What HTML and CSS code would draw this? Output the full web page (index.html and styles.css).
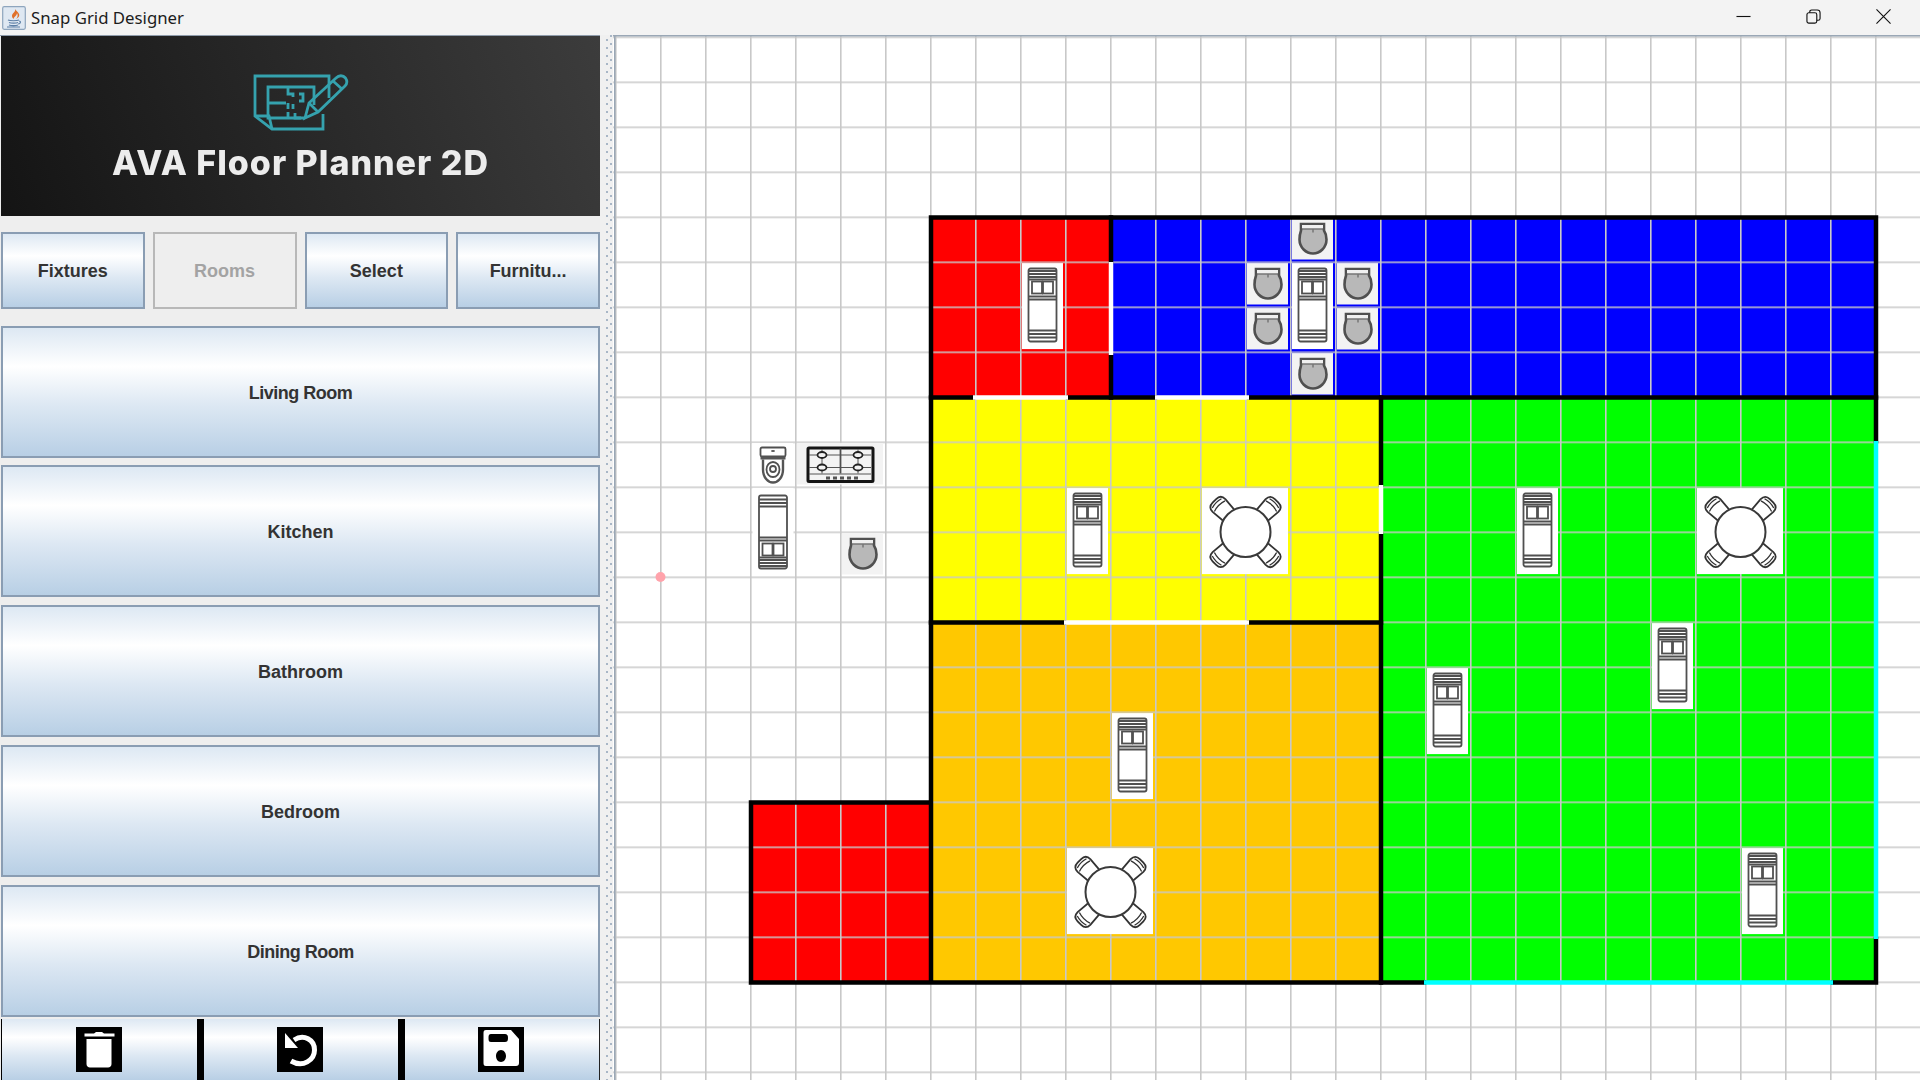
FILE: index.html
```html
<!DOCTYPE html>
<html lang="en">
<head>
<meta charset="utf-8">
<title>Snap Grid Designer</title>
<link rel="stylesheet" href="styles.css">
</head>
<body>
<header class="titlebar">
  <svg class="app-icon" viewBox="0 0 24 24" aria-hidden="true">
    <rect class="app-tile" x="0.7" y="0.7" width="22.6" height="22.6" rx="1.5"/>
    <path class="app-flame" d="M13 3c1 3-3 4-3 7 0 1.500 1 2.500 2 3-1-2 3-3 3-6 1 2 1 4-1 6 2-1 4-3 3-5-.5-2-3-3-4-5z"/>
    <path class="app-cup" d="M6 14c2 1 9 1 11 0M7 16.500c2 .8 7 .8 9 0M7 19c2 .8 7 .8 9 0M5 21h13M17 15c2 0 2 3-1 3"/>
  </svg>
  <span class="app-title">Snap Grid Designer</span>
  <div class="win-controls">
    <svg class="win-icon" viewBox="0 0 16 16" aria-hidden="true"><path d="M0.500 8h15"/></svg>
    <svg class="win-icon" viewBox="0 0 16 16" aria-hidden="true"><rect x="1" y="4" width="10.500" height="11" rx="2"/><path d="M4 4V3a2 2 0 0 1 2-2h6a3 3 0 0 1 3 3v6a2 2 0 0 1-2 2h-1.500"/></svg>
    <svg class="win-icon" viewBox="0 0 16 16" aria-hidden="true"><path d="M0.500 0.500l15 15M15.500 0.500l-15 15"/></svg>
  </div>
</header>

<main class="workspace">
  <aside class="sidebar">
    <div class="logo">
      <svg class="logo-mark" viewBox="240 65 120 75" aria-hidden="true">
        <path d="M322 114V129H271L254 116V76H328V98"/>
        <path d="M254 116H268L271 129"/>
        <path d="M304 118H267V87H313V105"/>
        <path d="M267 103H285M287 87V94H292V97M298 94H302V101H298M287 103V109M292 104V109M287 112V118M294 113V118H300"/>
        <path d="M304 118L308 103L335 78C338 75 342 75 344.500 78C346.500 81 346 84 344 86L317 112Z"/>
        <path d="M308 103L317 112M332 81L341 89"/>
      </svg>
      <div class="logo-text">AVA Floor Planner 2D</div>
    </div>

    <nav class="tabs">
      <button class="btn">Fixtures</button>
      <button class="btn btn-off">Rooms</button>
      <button class="btn">Select</button>
      <button class="btn">Furnitu...</button>
    </nav>

    <div class="room-list">
      <button class="btn btn-tight">Living Room</button>
      <button class="btn">Kitchen</button>
      <button class="btn">Bathroom</button>
      <button class="btn">Bedroom</button>
      <button class="btn btn-tight">Dining Room</button>
    </div>

    <div class="toolbar">
      <button class="tool tool-first">
        <svg class="tool-icon" viewBox="0 0 46 45" aria-hidden="true">
          <rect class="tool-bg" width="46" height="45"/>
          <path class="tool-fill" d="M8.500 6.500H18L20 5H26L28 6.500H38.500V9.500H8.500ZM10.500 12H35.500V37C35.500 39 34 40.500 32 40.500H14C12 40.500 10.500 39 10.500 37Z"/>
        </svg>
      </button>
      <button class="tool">
        <svg class="tool-icon" viewBox="0 0 46 45" aria-hidden="true">
          <rect class="tool-bg" width="46" height="45"/>
          <path class="tool-stroke" d="M17 13C27 6.500 37.500 13 37.500 23C37.500 33 26 41 14 34"/>
          <path class="tool-fill" d="M8 6V21H21Z"/>
        </svg>
      </button>
      <button class="tool tool-last">
        <svg class="tool-icon" viewBox="0 0 46 45" aria-hidden="true">
          <rect class="tool-bg" width="46" height="45"/>
          <path class="tool-fill" fill-rule="evenodd" d="M8 3H33L41 12V36C41 38 40 39 38 39H8C6 39 5.500 38 5.500 36V6C5.500 4 6 3 8 3ZM13 7C11 7 10.500 8 10.500 11C10.500 14 11 15 13 15H27C29 15 30 14 30 11C30 8 29 7 27 7ZM23 23C20 23 18 26 18 29C18 32 20 35 23 35C26 35 28 32 28 29C28 26 26 23 23 23Z"/>
        </svg>
      </button>
    </div>
  </aside>

  <div class="splitter"></div>

  <section class="canvas">
    <svg class="plan" viewBox="613 35 1307 1045" width="1307" height="1045" role="img" aria-label="Floor plan">
      <defs>
        <pattern id="grid" patternUnits="userSpaceOnUse" x="615" y="36.500" width="45" height="45">
          <rect class="grid-line" width="1.600" height="45"/>
          <rect class="grid-line" width="45" height="1.500"/>
        </pattern>

        <g id="bed">
          <rect class="tile-white" x="2" y="1.600" width="41" height="86"/>
          <g class="soft">
            <rect class="ink-box" x="8.500" y="7" width="28" height="73" rx="2"/>
            <path class="ink-thick" d="M8.500 9.500H36.500M8.500 12.500H36.500M8.500 15.500H36.500M8.500 18H36.500"/>
            <rect class="ink-box" x="12" y="20" width="10" height="12"/>
            <rect class="ink-box" x="23" y="20" width="10" height="12"/>
            <path class="ink-thick" d="M8.500 35H36.500M8.500 38H36.500"/>
            <path class="ink-thick" d="M8.500 69H36.500M8.500 72.500H36.500M8.500 76H36.500"/>
          </g>
        </g>

        <g id="chair">
          <rect class="tile-grey" x="2" y="1.600" width="41" height="41.400"/>
          <g class="soft">
            <path class="chair-body" d="M11 7.500H34V14C36 17 36.500 19 36.500 23C36.500 31 30 37 23 37C16 37 9.500 31 9.500 23C9.500 19 10 17 11 14Z"/>
            <rect class="chair-back" x="12" y="8.500" width="21" height="3.500"/>
            <path class="ink-thin" d="M11 12.500H34M23 13V16"/>
          </g>
        </g>

        <g id="toilet">
          <rect class="tile-white" x="2" y="1.600" width="41" height="41.400"/>
          <g class="soft">
            <path class="ink-bowl" d="M13 18V28C13 36 18 41 23 41C28 41 33 36 33 28V18"/>
            <rect class="ink-box" x="10.500" y="6" width="25" height="9" rx="1.500"/>
            <path class="ink-band" d="M10.500 16.500H35.500"/>
            <ellipse class="ink-dot" cx="23" cy="9.500" rx="2" ry="1"/>
            <ellipse class="ink-box" cx="23" cy="28" rx="6.500" ry="7.500"/>
            <circle class="ink-box" cx="23" cy="27.500" r="3"/>
          </g>
        </g>

        <g id="stove">
          <rect class="tile-grey" x="2" y="1.600" width="86" height="41.400"/>
          <g class="soft">
            <rect class="stove-frame" x="13" y="6.500" width="65" height="33.500" rx="1"/>
            <path class="ink-thin" d="M14 13.500H76M14 26H76M14 32.500H76M27 8V32M63 8V32"/>
            <path class="ink-thick" d="M45.500 7V32"/>
            <ellipse class="burner" cx="27" cy="13.500" rx="4.500" ry="3"/>
            <ellipse class="burner" cx="63" cy="13.500" rx="4.500" ry="3"/>
            <ellipse class="burner" cx="27" cy="26" rx="4.500" ry="3"/>
            <ellipse class="burner" cx="63" cy="26" rx="4.500" ry="3"/>
            <path class="stove-knobs" d="M31 36.500H35M38 36.500H42M45 36.500H49M52 36.500H56M59 36.500H63"/>
          </g>
        </g>

        <g id="seat">
          <path class="seat-shape" d="M38 26L36.500 8Q36.500 1.500 43 1.500H48Q54.500 1.500 54.500 8L53 26"/>
          <path class="ink-seat" d="M39 5Q45.500 3 52 5M38 9Q45.500 6.500 53 9"/>
        </g>

        <g id="table">
          <rect class="tile-white" x="2" y="1.600" width="86" height="86"/>
          <g class="soft">
            <use href="#seat" transform="rotate(45 45.500 45.500)"/>
            <use href="#seat" transform="rotate(135 45.500 45.500)"/>
            <use href="#seat" transform="rotate(225 45.500 45.500)"/>
            <use href="#seat" transform="rotate(315 45.500 45.500)"/>
            <circle class="table-top" cx="45.500" cy="45.500" r="25"/>
          </g>
        </g>
      </defs>

      <rect class="room-red" x="931" y="217.500" width="180" height="180"/>
      <rect class="room-blue" x="1111" y="217.500" width="765" height="180"/>
      <rect class="room-yellow" x="931" y="397.500" width="450" height="225"/>
      <rect class="room-orange" x="931" y="622.500" width="450" height="360"/>
      <rect class="room-green" x="1381" y="397.500" width="495" height="585"/>
      <rect class="room-red" x="751" y="802.500" width="180" height="180"/>

      <rect fill="url(#grid)" x="613" y="35" width="1307" height="1045"/>
      <rect class="frame" x="613" y="35" width="1307" height="1.500"/>
      <rect class="frame" x="614" y="35" width="1.500" height="1045"/>

      <use href="#chair" x="1290" y="216.500"/>
      <use href="#chair" x="1245" y="261.500"/>
      <use href="#chair" x="1335" y="261.500"/>
      <use href="#chair" x="1245" y="306.500"/>
      <use href="#chair" x="1335" y="306.500"/>
      <use href="#chair" x="1290" y="351.500"/>
      <use href="#chair" x="840" y="531.500"/>

      <use href="#bed" x="1020" y="261.500"/>
      <use href="#bed" x="1290" y="261.500"/>
      <use href="#bed" x="1065" y="486.500"/>
      <use href="#bed" x="1515" y="486.500"/>
      <use href="#bed" x="1650" y="621.500"/>
      <use href="#bed" x="1425" y="666.500"/>
      <use href="#bed" x="1740" y="846.500"/>
      <use href="#bed" x="1110" y="711.500"/>
      <use href="#bed" transform="translate(749.500 486.500) rotate(180 23 44.500)"/>

      <use href="#table" x="1200" y="486.500"/>
      <use href="#table" x="1695" y="486.500"/>
      <use href="#table" x="1065" y="846.500"/>

      <use href="#toilet" x="750" y="441.500"/>
      <use href="#stove" x="795" y="441.500"/>

      <path class="wall" d="M931 217.500H1876V441M1876 939V982.500H1833M1424 982.500H751V802.500H931M931 982.500V217.500"/>
      <path class="wall" d="M1111 217.500V262M1111 355V397.500"/>
      <path class="wall" d="M931 397.500H973M1068 397.500H1155M1249 397.500H1876"/>
      <path class="wall" d="M931 622.500H1064M1249 622.500H1381"/>
      <path class="wall" d="M1381 397.500V485M1381 534V982.500"/>
      <path class="wall-open" d="M1111 262V355M973 397.500H1068M1155 397.500H1249M1064 622.500H1249M1381 485V534"/>
      <path class="wall-live" d="M1876 441V939M1424 982.500H1833"/>
      <circle class="marker" cx="660.500" cy="577" r="5"/>
    </svg>
  </section>
</main>
</body>
</html>
```

FILE: styles.css
```css
* { box-sizing: border-box; }

html, body {
  margin: 0;
  width: 1920px;
  height: 1080px;
  overflow: hidden;
}

body {
  background: #eeeeee;
  font-family: "Liberation Sans", Arial, sans-serif;
  display: flex;
  flex-direction: column;
}

/* Title bar */
.titlebar {
  height: 35px;
  flex: none;
  display: flex;
  align-items: center;
  background: #f3f3f3;
  padding-left: 2px;
}

.app-icon { width: 24px; height: 24px; }
.app-tile { fill: #dfe8f2; stroke: #8ea5bd; stroke-width: 1.2; }
.app-flame { fill: #e0702a; }
.app-cup { fill: none; stroke: #5c7fa6; stroke-width: 1.2; }

.app-title {
  margin-left: 5px;
  font-family: "Noto Sans", "Open Sans", sans-serif;
  font-size: 16.800px;
  color: #1c1c1c;
  white-space: nowrap;
}

.win-controls {
  margin-left: auto;
  width: 155px;
  margin-right: 29px;
  display: flex;
  justify-content: space-between;
  margin-top: -2px;
}

.win-icon { width: 15px; height: 15px; fill: none; stroke: #111; stroke-width: 1.2; }

/* Main layout */
.workspace { flex: 1; display: flex; min-height: 0; }

.sidebar {
  width: 600px;
  flex: none;
  padding-left: 1px;
  display: flex;
  flex-direction: column;
  overflow: hidden;
  background: #eeeeee;
  border-top: 1.500px solid #8f9cab;
}

.logo {
  height: 179.500px;
  flex: none;
  background: linear-gradient(70deg, #141414 0%, #262626 45%, #3c3c3c 100%);
  display: flex;
  flex-direction: column;
  align-items: center;
  padding-top: 28.500px;
}

.logo-mark {
  width: 120px;
  height: 75px;
  flex: none;
  fill: none;
  stroke: #35a2ae;
  stroke-width: 2.800;
  filter: blur(0.4px);
}

.logo-text {
  margin-top: 3px;
  font-family: "Inter", "Open Sans", sans-serif;
  font-weight: 800;
  font-size: 34px;
  letter-spacing: 1px;
  line-height: 40px;
  color: #ececec;
  white-space: nowrap;
  filter: blur(0.4px);
}

.btn {
  display: flex;
  align-items: center;
  justify-content: center;
  padding: 3px 0 0;
  font-family: "Liberation Sans", Arial, sans-serif;
  font-weight: 700;
  font-size: 18px;
  color: #333333;
  border: 2px solid #8a9db3;
  background: linear-gradient(#dde8f3 0%, #ffffff 30%, #dde8f3 60%, #b8cfe5 100%);
}

.btn-tight { letter-spacing: -0.500px; }

.btn-off {
  color: #a3a3a3;
  border-color: #b8b8b8;
  background: #eeeeee;
}

.tabs {
  margin-top: 16px;
  height: 77px;
  flex: none;
  display: grid;
  grid-template-columns: repeat(4, 1fr);
  gap: 8px;
}

.room-list {
  margin-top: 17px;
  flex: none;
  display: grid;
  grid-auto-rows: 132px;
  gap: 7.750px;
}

.toolbar {
  margin-top: 2px;
  height: 61px;
  flex: none;
  display: grid;
  grid-template-columns: 196px 201px 202px;
}

.tool {
  padding: 0;
  border: 0;
  border-left: 7px solid #000;
  display: flex;
  justify-content: center;
  align-items: flex-start;
  background: linear-gradient(#dde8f3 0%, #ffffff 30%, #dde8f3 60%, #b8cfe5 100%);
}

.tool-first { border-left-width: 1.500px; }
.tool-last { border-right: 1.500px solid #222; }

.tool-icon { width: 46px; height: 45px; margin: 8px 2px 0 0; }
.tool-bg { fill: #000; }
.tool-fill { fill: #fff; }
.tool-stroke { fill: none; stroke: #fff; stroke-width: 5; }

.splitter {
  width: 13px;
  flex: none;
  background-color: #f0f0f0;
  background-image:
    radial-gradient(circle at 1px 1px, #a8b6c6 1px, transparent 1.300px),
    radial-gradient(circle at 1px 1px, #a8b6c6 1px, transparent 1.300px);
  background-size: 8px 8px, 8px 8px;
  background-position: 6px 4px, 9.500px 8px;
  background-repeat: repeat-y;
}

.canvas { flex: none; width: 1307px; height: 1045px; background: #fff; overflow: hidden; }
.plan { display: block; }

/* Plan */
.grid-line { fill: #c8c8c8; }
.frame { fill: #9aa7b5; }
.room-red { fill: #ff0000; }
.room-blue { fill: #0000ff; }
.room-yellow { fill: #ffff00; }
.room-orange { fill: #ffc800; }
.room-green { fill: #00ff00; }

.wall { fill: none; stroke: #000; stroke-width: 4.500; stroke-linecap: square; }
.wall-open { fill: none; stroke: #fff; stroke-width: 4.500; }
.wall-live { fill: none; stroke: #00ffff; stroke-width: 4.500; }
.marker { fill: #ffa3ab; }

.tile-white { fill: #ffffff; }
.tile-grey { fill: #f3f3f3; }
.soft { filter: blur(0.4px); }

.ink-box { fill: #fff; stroke: #505050; stroke-width: 1.800; }
.ink-thick { fill: none; stroke: #505050; stroke-width: 1.800; }
.ink-thin { fill: none; stroke: #555; stroke-width: 1; }
.ink-dot { fill: #555; }
.ink-band { fill: none; stroke: #555; stroke-width: 3; }
.ink-bowl { fill: #fff; stroke: #555; stroke-width: 2.400; }

.chair-body { fill: #b8b8b8; stroke: #505050; stroke-width: 2.600; }
.chair-back { fill: #f0f0f0; }

.stove-frame { fill: #f3f3f3; stroke: #151515; stroke-width: 3; }
.burner { fill: #f3f3f3; stroke: #222; stroke-width: 1.800; }
.stove-knobs { fill: none; stroke: #555; stroke-width: 3; }

.seat-shape { fill: #fff; stroke: #333; stroke-width: 1.800; }
.ink-seat { fill: none; stroke: #333; stroke-width: 1.300; }
.table-top { fill: #fff; stroke: #3a3a3a; stroke-width: 2; }
```
